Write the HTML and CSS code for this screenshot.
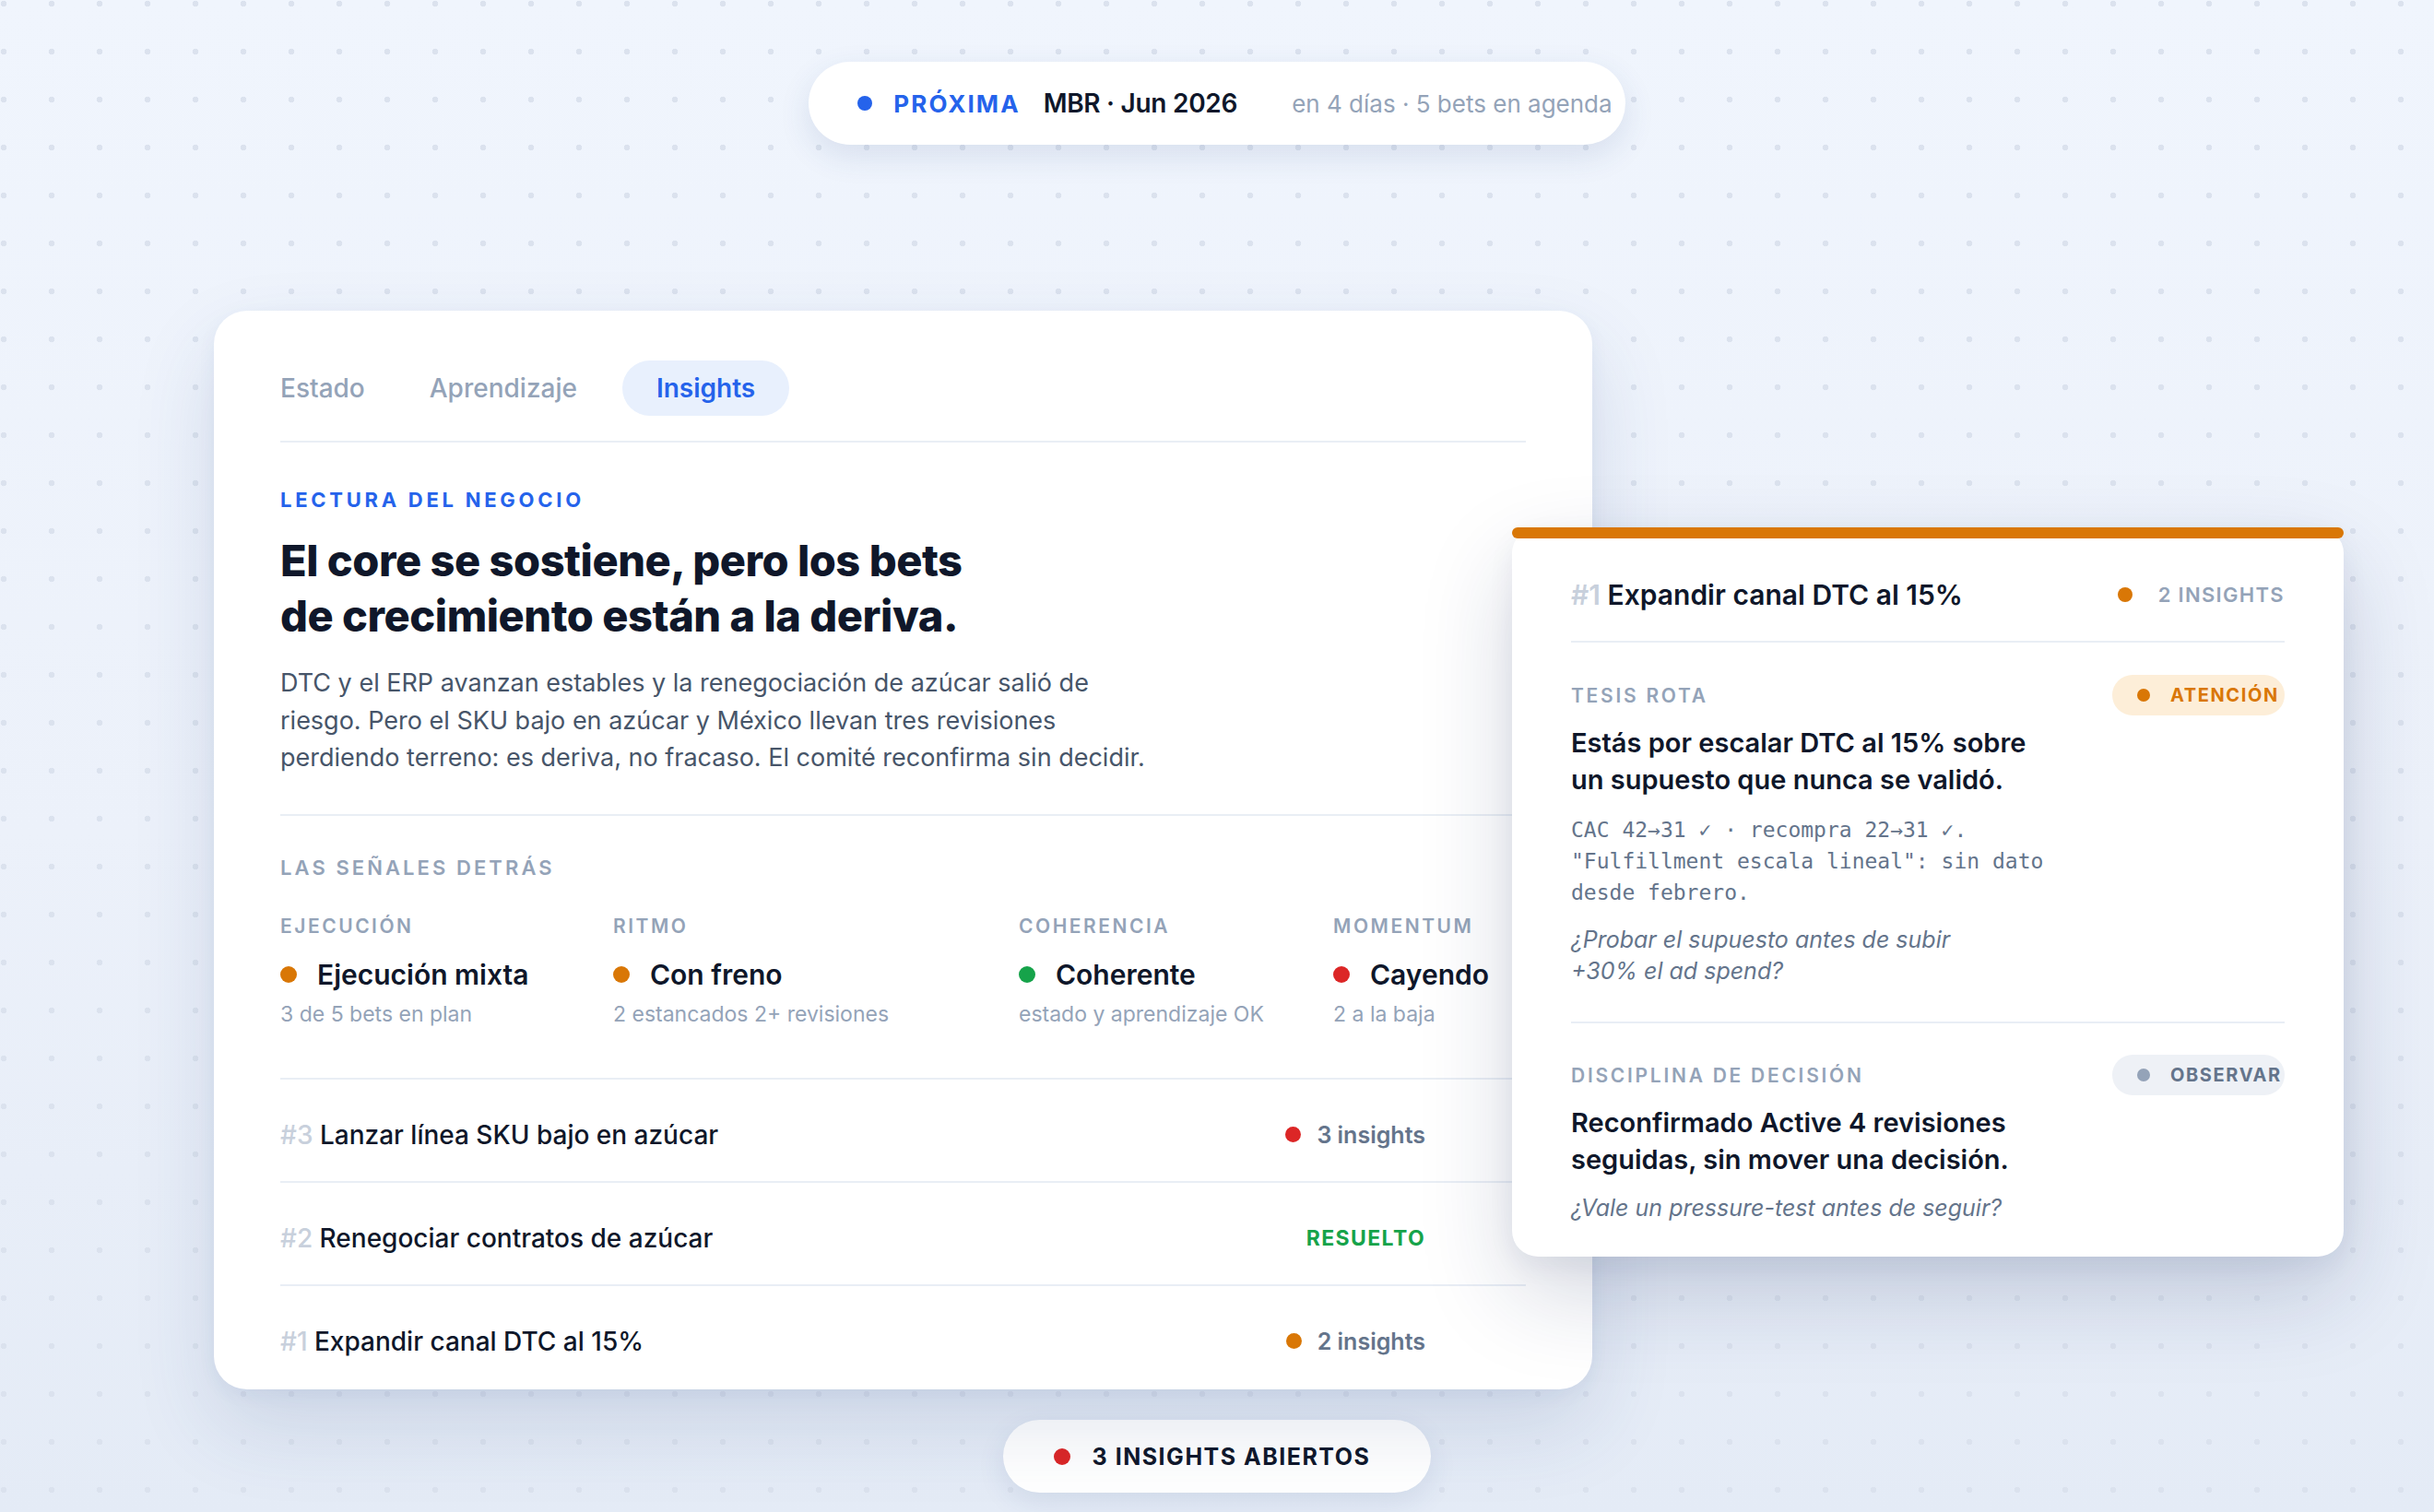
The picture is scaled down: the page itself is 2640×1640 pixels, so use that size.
FILE: index.html
```html
<!DOCTYPE html>
<html lang="es">
<head>
  <meta charset="UTF-8" />
  <meta name="viewport" content="width=device-width, initial-scale=1.0"/>
  <title>MBR · Insights</title>
  <link rel="stylesheet" href="styles.css">
</head>
<body>

  <div class="next-pill">
    <span class="dot dot-blue"></span>
    <span class="next-tag">PRÓXIMA</span>
    <span class="next-title">MBR · Jun 2026</span>
    <span class="next-meta">en 4 días · 5 bets en agenda</span>
  </div>

  <div class="stage">

    <section class="card main">
      <nav class="tabs">
        <a href="#" class="tab">Estado</a>
        <a href="#" class="tab">Aprendizaje</a>
        <a href="#" class="tab active">Insights</a>
      </nav>

      <p class="eyebrow">LECTURA DEL NEGOCIO</p>
      <h1>El core se sostiene, pero los bets<br>de crecimiento están a la deriva.</h1>
      <p class="lead">DTC y el ERP avanzan estables y la renegociación de azúcar salió de riesgo. Pero el SKU bajo en azúcar y México llevan tres revisiones perdiendo terreno: es deriva, no fracaso. El comité reconfirma sin decidir.</p>

      <div class="signals">
        <p class="section-label">LAS SEÑALES DETRÁS</p>
        <div class="signal-grid">
          <div class="signal">
            <div class="signal-label">EJECUCIÓN</div>
            <div class="signal-value"><span class="dot dot-orange"></span>Ejecución mixta</div>
            <div class="signal-sub">3 de 5 bets en plan</div>
          </div>
          <div class="signal">
            <div class="signal-label">RITMO</div>
            <div class="signal-value"><span class="dot dot-orange"></span>Con freno</div>
            <div class="signal-sub">2 estancados 2+ revisiones</div>
          </div>
          <div class="signal">
            <div class="signal-label">COHERENCIA</div>
            <div class="signal-value"><span class="dot dot-green"></span>Coherente</div>
            <div class="signal-sub">estado y aprendizaje OK</div>
          </div>
          <div class="signal">
            <div class="signal-label">MOMENTUM</div>
            <div class="signal-value"><span class="dot dot-red"></span>Cayendo</div>
            <div class="signal-sub">2 a la baja</div>
          </div>
        </div>
      </div>

      <ul class="bets">
        <li class="bet">
          <span class="bet-name"><span class="rank">#3</span> Lanzar línea SKU bajo en azúcar</span>
          <span class="bet-meta"><span class="dot dot-red"></span>3 insights</span>
        </li>
        <li class="bet">
          <span class="bet-name"><span class="rank">#2</span> Renegociar contratos de azúcar</span>
          <span class="bet-meta resolved">RESUELTO</span>
        </li>
        <li class="bet">
          <span class="bet-name"><span class="rank">#1</span> Expandir canal DTC al 15%</span>
          <span class="bet-meta"><span class="dot dot-orange"></span>2 insights</span>
        </li>
      </ul>
    </section>

    <aside class="card detail">
      <div class="detail-head">
        <span class="detail-title"><span class="rank">#1</span> Expandir canal DTC al 15%</span>
        <span class="detail-count"><span class="dot dot-orange"></span>2 INSIGHTS</span>
      </div>

      <div class="insight">
        <div class="insight-top">
          <span class="insight-label">TESIS ROTA</span>
          <span class="badge badge-warn"><span class="dot dot-orange"></span>ATENCIÓN</span>
        </div>
        <h3>Estás por escalar DTC al 15% sobre un supuesto que nunca se validó.</h3>
        <p class="evidence">CAC 42→31 ✓ · recompra 22→31 ✓.<br>"Fulfillment escala lineal": sin dato desde febrero.</p>
        <p class="question">¿Probar el supuesto antes de subir<br>+30% el ad spend?</p>
      </div>

      <div class="insight">
        <div class="insight-top">
          <span class="insight-label">DISCIPLINA DE DECISIÓN</span>
          <span class="badge badge-muted"><span class="dot dot-gray"></span>OBSERVAR</span>
        </div>
        <h3>Reconfirmado Active 4 revisiones seguidas, sin mover una decisión.</h3>
        <p class="question">¿Vale un pressure-test antes de seguir?</p>
      </div>
    </aside>

  </div>

  <div class="open-pill">
    <span class="dot dot-red"></span>
    3 INSIGHTS ABIERTOS
  </div>

</body>
</html>
```

FILE: styles.css
```css
html, body {
  height: 100%;
}

body {
  margin: 0;
  padding: 0;
  overflow: hidden;
  font-family: Inter, "Noto Sans", sans-serif;
  color: #0f172a;
  background-color: #eaf0f9;
  background-image:
    radial-gradient(circle, #dbe2ee 3px, transparent 3.6px),
    linear-gradient(180deg, #f0f5fd 0%, #ecf1fa 55%, #e4ebf6 100%);
  background-size: 52px 52px, 100% 100%;
  background-position: -22px -22px, 0 0;
  display: flex;
  flex-direction: column;
  align-items: center;
}

p, h1, h3, ul {
  margin: 0;
}

.dot {
  display: inline-block;
  width: 16px;
  height: 16px;
  border-radius: 50%;
  flex: none;
}

.dot-blue { background: #2563eb; }
.dot-orange { background: #d97706; }
.dot-green { background: #16a34a; }
.dot-red { background: #dc2626; }
.dot-gray { background: #94a3b8; }

/* top pill */
.next-pill {
  margin-top: 67px;
  height: 90px;
  box-sizing: border-box;
  padding: 0 14px 0 53px;
  display: flex;
  align-items: center;
  background: white;
  border-radius: 45px;
  box-shadow: 0 12px 34px rgba(40, 70, 130, 0.12);
}

.next-tag {
  margin-left: 23px;
  color: #2563eb;
  font-size: 26px;
  font-weight: 700;
  letter-spacing: 0.08em;
}

.next-title {
  margin-left: 25px;
  font-size: 28px;
  font-weight: 600;
  letter-spacing: -0.01em;
}

.next-meta {
  margin-left: 59px;
  font-size: 26px;
  color: #94a3b8;
}

/* layout */
.stage {
  position: relative;
  align-self: flex-start;
  margin: 180px 0 0 232px;
}

.card {
  background: white;
  box-sizing: border-box;
}

.main {
  width: 1495px;
  height: 1170px;
  padding: 54px 72px 0;
  border-radius: 36px;
  box-shadow: 0 40px 90px rgba(40, 70, 130, 0.14), 0 6px 20px rgba(40, 70, 130, 0.05);
}

.tabs {
  display: flex;
  padding-bottom: 27px;
  border-bottom: 2px solid #e9eef5;
}

.tab {
  height: 60px;
  display: flex;
  align-items: center;
  padding: 0 35px;
  border-radius: 30px;
  color: #94a3b8;
  font-size: 28px;
  font-weight: 500;
  text-decoration: none;
}

.tab:first-child {
  padding-left: 0;
}

.tab.active {
  background: #e8f0fd;
  color: #2563eb;
  font-weight: 600;
  margin-left: 14px;
  padding: 0 37px;
}

.eyebrow, .section-label {
  font-size: 22px;
  font-weight: 700;
  letter-spacing: 0.14em;
  line-height: 26px;
}

.eyebrow {
  margin-top: 49px;
  color: #2563eb;
  letter-spacing: 0.17em;
}

h1 {
  margin-top: 23px;
  font-size: 47px;
  font-weight: 800;
  line-height: 60px;
  letter-spacing: -0.01em;
}

.lead {
  margin-top: 23px;
  max-width: 955px;
  font-size: 27px;
  line-height: 40.5px;
  color: #475569;
}

.signals {
  margin-top: 40px;
  padding-top: 43px;
  border-top: 2px solid #e9eef5;
}

.section-label {
  color: #94a3b8;
  font-weight: 600;
}

.signal-grid {
  margin-top: 38px;
  display: grid;
  grid-template-columns: 361px 440px 341px auto;
  padding-bottom: 54px;
}

.signal-label {
  font-size: 21px;
  font-weight: 600;
  letter-spacing: 0.12em;
  line-height: 26px;
  color: #94a3b8;
}

.signal-value {
  margin-top: 21px;
  display: flex;
  align-items: center;
  gap: 22px;
  font-size: 30px;
  font-weight: 600;
  line-height: 36px;
}

.signal-value .dot {
  width: 18px;
  height: 18px;
}

.signal-sub {
  margin-top: 10px;
  font-size: 23px;
  line-height: 30px;
  color: #94a3b8;
}

.bets {
  list-style: none;
  padding: 0;
}

.bet {
  display: flex;
  justify-content: space-between;
  align-items: center;
  padding: 40px 109px 30px 0;
  border-top: 2px solid #e9eef5;
  line-height: 40px;
}

.bet-name {
  font-size: 28px;
  font-weight: 500;
}

.rank {
  color: #c8d0dc;
}

.bet-meta {
  display: flex;
  align-items: center;
  gap: 17px;
  font-size: 25px;
  font-weight: 600;
  color: #64748b;
}

.bet-meta .dot {
  width: 17px;
  height: 17px;
}

.bet-meta.resolved {
  color: #16a34a;
  font-size: 23px;
  font-weight: 700;
  letter-spacing: 0.06em;
}

/* side card */
.detail {
  position: absolute;
  left: 1408px;
  top: 235px;
  width: 902px;
  padding: 53px 64px 36px;
  border-radius: 28px;
  box-shadow: 0 40px 100px rgba(20, 40, 90, 0.18), 0 10px 30px rgba(20, 40, 90, 0.06);
}

.detail::before {
  content: "";
  position: absolute;
  top: 0;
  left: 0;
  right: 0;
  height: 12px;
  border-radius: 6px;
  background: #d97706;
}

.detail-head {
  display: flex;
  justify-content: space-between;
  align-items: center;
  padding-bottom: 30px;
  border-bottom: 2px solid #e9eef5;
  line-height: 40px;
}

.detail-title {
  font-size: 30px;
  font-weight: 600;
}

.detail-count {
  display: flex;
  align-items: center;
  gap: 28px;
  font-size: 22px;
  font-weight: 600;
  letter-spacing: 0.06em;
  color: #94a3b8;
}

.insight {
  padding: 35px 0 38px;
}

.insight + .insight {
  padding-top: 34px;
  padding-bottom: 0;
  border-top: 2px solid #e9eef5;
}

.insight-top {
  display: flex;
  justify-content: space-between;
  align-items: center;
}

.insight-label {
  font-size: 21px;
  font-weight: 600;
  letter-spacing: 0.13em;
  color: #94a3b8;
}

.badge {
  width: 187px;
  height: 44px;
  box-sizing: border-box;
  padding-left: 27px;
  display: flex;
  align-items: center;
  gap: 22px;
  border-radius: 22px;
  font-size: 20px;
  font-weight: 700;
  letter-spacing: 0.08em;
}

.badge .dot {
  width: 14px;
  height: 14px;
}

.badge-warn {
  background: #fdeed8;
  color: #d97706;
}

.badge-muted {
  background: #eef1f6;
  color: #64748b;
}

.insight h3 {
  margin-top: 10px;
  max-width: 520px;
  font-size: 29px;
  font-weight: 600;
  line-height: 40px;
}

.evidence {
  margin-top: 17px;
  max-width: 540px;
  font-family: "DejaVu Sans Mono", "Liberation Mono", monospace;
  font-size: 23px;
  line-height: 34px;
  color: #64748b;
}

.question {
  margin-top: 17px;
  font-size: 25px;
  font-style: italic;
  line-height: 34px;
  color: #64748b;
}

.insight + .insight .question {
  margin-top: 15px;
}

/* bottom pill */
.open-pill {
  margin-top: 33px;
  height: 79px;
  box-sizing: border-box;
  padding: 0 66px 0 55px;
  display: flex;
  align-items: center;
  gap: 24px;
  background: white;
  border-radius: 40px;
  font-size: 25px;
  font-weight: 700;
  letter-spacing: 0.06em;
  box-shadow: 0 10px 30px rgba(40, 70, 130, 0.1);
}

.open-pill .dot {
  width: 18px;
  height: 18px;
}
```
